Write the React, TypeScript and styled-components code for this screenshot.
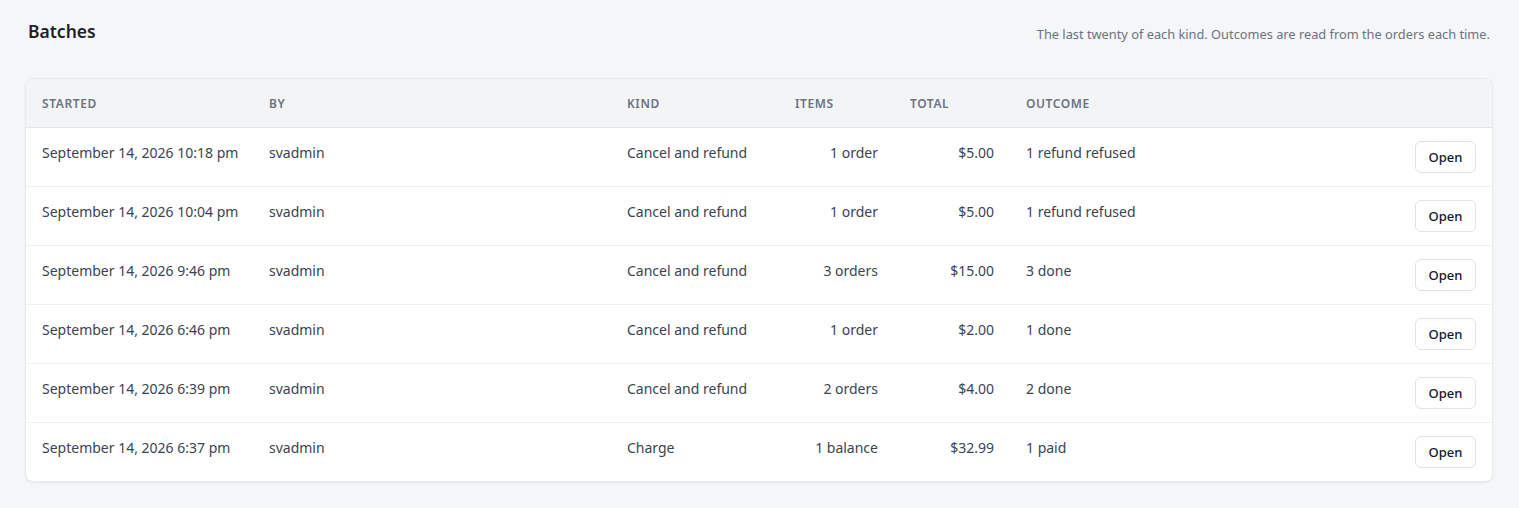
import { FC } from "react";
import styled, { createGlobalStyle } from "styled-components";

const GlobalStyle = createGlobalStyle`
  html, body {
    margin: 0;
    padding: 0;
    background: #f5f6f8;
    font-family: "Noto Sans", "Open Sans", sans-serif;
    color: #1f2937;
  }
`;

const SPage = styled.div`
  padding: 18px 26px 26px 25px;
`;

const SHeader = styled.div`
  display: flex;
  justify-content: space-between;
  align-items: center;
  padding-left: 3px;
  padding-right: 3px;
  margin-bottom: 33px;
`;

const STitle = styled.h2`
  margin: 0;
  font-size: 17.5px;
  font-weight: 600;
  line-height: 27px;
  color: #1f2328;
`;

const SSubtitle = styled.p`
  margin: 4px 0 0;
  font-size: 12.8px;
  color: #6b7280;
`;

const SCard = styled.div`
  background: #ffffff;
  border: 1px solid #e8eaee;
  border-radius: 8px;
  box-shadow: 0 1px 2px rgba(16, 24, 40, 0.06);
  overflow: hidden;
`;

const COLUMNS = "227px 358px 168px 115px 116px 1fr 93px";

const SHeadRow = styled.div`
  display: grid;
  grid-template-columns: ${COLUMNS};
  height: 48px;
  align-items: center;
  background: #f3f4f6;
  border-bottom: 1px solid #e5e7eb;
`;

const SHeadCell = styled.div`
  padding: 0 16px;
  font-size: 12px;
  font-weight: 600;
  letter-spacing: 0.05em;
  text-transform: uppercase;
  color: #6b7280;
`;

const SRow = styled.div`
  display: grid;
  grid-template-columns: ${COLUMNS};
  align-items: start;
  border-bottom: 1px solid #eef0f3;

  &:last-child {
    border-bottom: none;
  }
`;

const SCell = styled.div<{ $right?: boolean }>`
  padding: 13px 16px 0;
  font-size: 14px;
  line-height: 24px;
  white-space: nowrap;
  color: #3b4350;
  text-align: ${({ $right }) => ($right ? "right" : "left")};
`;

const SActionCell = styled.div`
  display: flex;
  justify-content: flex-end;
  padding: 13px 16px 13px;
`;

const SOpenButton = styled.button`
  height: 32px;
  width: 61px;
  background: #ffffff;
  border: 1px solid #dfe2e7;
  border-radius: 6px;
  font-family: inherit;
  font-size: 13px;
  font-weight: 500;
  color: #111827;
  cursor: pointer;
`;

interface Batch {
  started: string;
  by: string;
  kind: string;
  items: string;
  total: string;
  outcome: string;
}

const batches: Batch[] = [
  { started: "September 14, 2026 10:18 pm", by: "svadmin", kind: "Cancel and refund", items: "1 order", total: "$5.00", outcome: "1 refund refused" },
  { started: "September 14, 2026 10:04 pm", by: "svadmin", kind: "Cancel and refund", items: "1 order", total: "$5.00", outcome: "1 refund refused" },
  { started: "September 14, 2026 9:46 pm", by: "svadmin", kind: "Cancel and refund", items: "3 orders", total: "$15.00", outcome: "3 done" },
  { started: "September 14, 2026 6:46 pm", by: "svadmin", kind: "Cancel and refund", items: "1 order", total: "$2.00", outcome: "1 done" },
  { started: "September 14, 2026 6:39 pm", by: "svadmin", kind: "Cancel and refund", items: "2 orders", total: "$4.00", outcome: "2 done" },
  { started: "September 14, 2026 6:37 pm", by: "svadmin", kind: "Charge", items: "1 balance", total: "$32.99", outcome: "1 paid" },
];

const BatchRow: FC<{ batch: Batch }> = ({ batch }) => (
  <SRow>
    <SCell>{batch.started}</SCell>
    <SCell>{batch.by}</SCell>
    <SCell>{batch.kind}</SCell>
    <SCell $right>{batch.items}</SCell>
    <SCell $right>{batch.total}</SCell>
    <SCell>{batch.outcome}</SCell>
    <SActionCell>
      <SOpenButton>Open</SOpenButton>
    </SActionCell>
  </SRow>
);

const App: FC = () => {
  return (
    <>
      <GlobalStyle />
      <SPage>
        <SHeader>
          <STitle>Batches</STitle>
          <SSubtitle>The last twenty of each kind. Outcomes are read from the orders each time.</SSubtitle>
        </SHeader>
        <SCard>
          <SHeadRow>
            <SHeadCell>Started</SHeadCell>
            <SHeadCell>By</SHeadCell>
            <SHeadCell>Kind</SHeadCell>
            <SHeadCell>Items</SHeadCell>
            <SHeadCell>Total</SHeadCell>
            <SHeadCell>Outcome</SHeadCell>
            <SHeadCell />
          </SHeadRow>
          {batches.map((b) => (
            <BatchRow key={b.started} batch={b} />
          ))}
        </SCard>
      </SPage>
    </>
  );
};

export default App;
